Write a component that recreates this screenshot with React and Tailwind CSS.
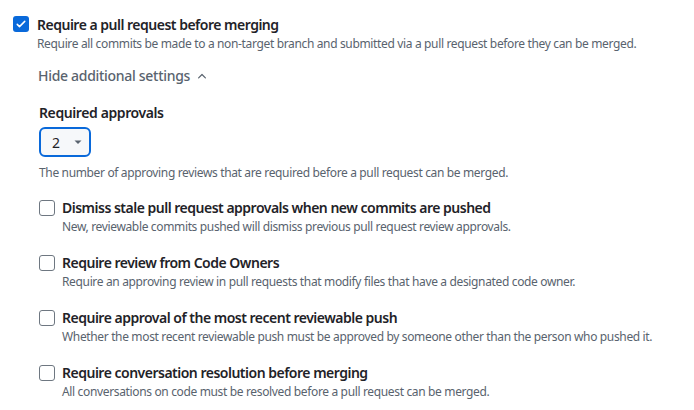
import React from "react";

function Check({ checked }) {
  if (checked) {
    return (
      <span className="flex h-4 w-4 shrink-0 items-center justify-center rounded-[3px] bg-[#0969da]">
        <svg viewBox="0 0 16 16" className="h-3 w-3" fill="none">
          <path d="M3 8.5l3 3 7-7" stroke="white" strokeWidth="2" strokeLinecap="round" strokeLinejoin="round" />
        </svg>
      </span>
    );
  }
  return <span className="block h-4 w-4 shrink-0 rounded-[3px] border border-[#6e7781] bg-white" />;
}

function Option({ title, desc }) {
  return (
    <div className="flex gap-[7px]">
      <div className="pt-[3px]">
        <Check />
      </div>
      <div>
        <div className="text-[14px] font-semibold leading-[21px] tracking-[-0.5px] text-[#1f2328]">{title}</div>
        <div className="text-[12px] leading-[18px] tracking-[-0.35px] text-[#59636e]">{desc}</div>
      </div>
    </div>
  );
}

export default function App() {
  return (
    <div className="h-[410px] w-[694px] bg-white pl-[13px] pt-[14px]" style={{ fontFamily: '"Noto Sans", sans-serif' }}>
      <div className="flex gap-[8px]">
        <div className="pt-[2px]">
          <Check checked />
        </div>
        <div>
          <div className="text-[14px] font-semibold leading-[21px] tracking-[-0.5px] text-[#1f2328]">Require a pull request before merging</div>
          <div className="text-[12px] leading-[18px] tracking-[-0.35px] text-[#59636e]">
            Require all commits be made to a non-target branch and submitted via a pull request before they can be merged.
          </div>
        </div>
      </div>
      <div className="pl-[25px]">
        <div className="mt-[12px] flex items-center gap-[6px] text-[14px] font-medium leading-[21px] tracking-[-0.3px] text-[#59636e]">
          Hide additional settings
          <svg viewBox="0 0 16 16" className="h-3 w-3" fill="none">
            <path d="M3.5 10.5L8 6l4.5 4.5" stroke="#59636e" strokeWidth="1.6" strokeLinecap="round" strokeLinejoin="round" />
          </svg>
        </div>
        <div className="mt-[16px] pl-[1px] text-[14px] font-semibold leading-[21px] tracking-[-0.4px] text-[#1f2328]">Required approvals</div>
        <div className="ml-[1px] mt-[4px] flex h-[30px] w-[52px] items-center gap-[10px] rounded-[6px] border-2 border-[#0969da] bg-[#f6f8fa] pl-[11px] text-[14px] text-[#1f2328]">
          2
          <svg viewBox="0 0 16 16" className="h-4 w-4" fill="#59636e">
            <path d="M4.5 6.5h7L8 10z" />
          </svg>
        </div>
        <div className="ml-[1px] mt-[7px] text-[12px] leading-[18px] tracking-[-0.35px] text-[#59636e]">
          The number of approving reviews that are required before a pull request can be merged.
        </div>
        <div className="ml-[1px] mt-[15px] flex flex-col gap-[16px]">
          <Option
            title="Dismiss stale pull request approvals when new commits are pushed"
            desc="New, reviewable commits pushed will dismiss previous pull request review approvals."
          />
          <Option
            title="Require review from Code Owners"
            desc="Require an approving review in pull requests that modify files that have a designated code owner."
          />
          <Option
            title="Require approval of the most recent reviewable push"
            desc="Whether the most recent reviewable push must be approved by someone other than the person who pushed it."
          />
          <Option
            title="Require conversation resolution before merging"
            desc="All conversations on code must be resolved before a pull request can be merged."
          />
        </div>
      </div>
    </div>
  );
}
